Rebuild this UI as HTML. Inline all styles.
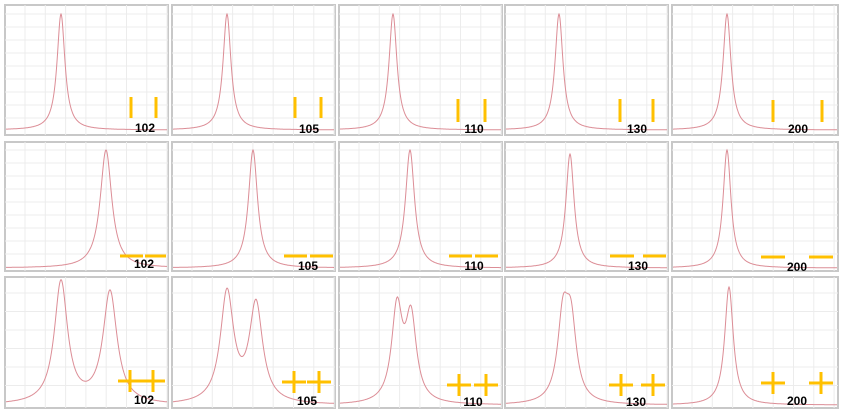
<!DOCTYPE html>
<html><head><meta charset="utf-8"><style>
html,body{margin:0;padding:0;background:#fff;width:843px;height:413px;overflow:hidden}
svg{display:block}
</style></head><body>
<svg id="s" width="843" height="413" xmlns="http://www.w3.org/2000/svg" font-family="Liberation Sans, sans-serif"></svg>
<script>
var s=document.getElementById('s'),h='';
var cols=[[5,168],[172,335],[339,502],[505,668],[672,838]];
var rows=[[5,135,13],[142,271,13],[277,408,18.5]];
var Y='#ffc000',C='#dc8d96';
var data=[
 [{p:[[61,116,4.8]],b:130,bars:'v',bx:[131,156],by:[97,118],lx:145,ly:132,t:'102'},
  {p:[[227,116,4.8]],b:130,bars:'v',bx:[295,321],by:[97,118],lx:309,ly:133,t:'105'},
  {p:[[393,116,4.8]],b:130,bars:'v',bx:[458,485],by:[99,122],lx:474,ly:133,t:'110'},
  {p:[[559,116,4.8]],b:130,bars:'v',bx:[620,653],by:[99,122],lx:637,ly:133,t:'130'},
  {p:[[727,116,4.8]],b:130,bars:'v',bx:[773,822],by:[100,122],lx:798,ly:133,t:'200'}],
 [{p:[[106,118,7]],b:268,bars:'h',bx:[[120,143],[145,166]],by:256,lx:144,ly:268,t:'102'},
  {p:[[253,118,5.5]],b:268,bars:'h',bx:[[284,307],[310,333]],by:256,lx:308,ly:270,t:'105'},
  {p:[[410,118,5.5]],b:268,bars:'h',bx:[[449,472],[475,498]],by:256,lx:474,ly:270,t:'110'},
  {p:[[570,114,5]],b:268,bars:'h',bx:[[610,634],[643,666]],by:256,lx:638,ly:270,t:'130'},
  {p:[[727,118,4.8]],b:268,bars:'h',bx:[[761,785],[809,833]],by:257,lx:797,ly:271,t:'200'}],
 [{p:[[61,122,8],[110,112,8.5]],b:405,bars:'p',bx:[130,153],by:381,lx:144,ly:404,t:'102'},
  {p:[[227,110,8],[256,98,8]],b:405,bars:'p',bx:[294,319],by:382,lx:307,ly:405,t:'105'},
  {p:[[397,93,6.5],[411,83,6.5]],b:405,bars:'p',bx:[459,486],by:385,lx:473,ly:406,t:'110'},
  {p:[[563,80,6.5],[571,74,6.5]],b:405,bars:'p',bx:[621,653],by:385,lx:636,ly:406,t:'130'},
  {p:[[729,118,5.2]],b:405,bars:'p',bx:[773,821],by:383,lx:797,ly:405,t:'200'}]
];
for(var r=0;r<3;r++){var R=rows[r];for(var c=0;c<5;c++){var X=cols[c],d=data[r][c];
 var x0=X[0],x1=X[1],y0=R[0],y1=R[1];
 h+='<rect x="'+x0+'" y="'+y0+'" width="'+(x1-x0)+'" height="'+(y1-y0)+'" fill="#fff" stroke="#c8c8c8" stroke-width="2"/>';
 for(var gx=x0+20;gx<x1;gx+=20.3)h+='<line x1="'+gx+'" y1="'+y0+'" x2="'+gx+'" y2="'+y1+'" stroke="#ececec"/>';
 for(var gy=y1-4-R[2];gy>y0;gy-=R[2])h+='<line x1="'+x0+'" y1="'+gy+'" x2="'+x1+'" y2="'+gy+'" stroke="#ececec"/>';
 var pts=[];for(var x=x0+1;x<=x1-1;x+=0.5){var v=0;d.p.forEach(function(p){var u=(x-p[0])/p[2];v+=p[1]/(1+u*u);});pts.push(x.toFixed(1)+','+(d.b-v).toFixed(1));}
 h+='<polyline points="'+pts.join(' ')+'" fill="none" stroke="'+C+'" stroke-width="1"/>';
 if(d.bars=='v'){d.bx.forEach(function(bx){h+='<rect x="'+(bx-1.5)+'" y="'+d.by[0]+'" width="3" height="'+(d.by[1]-d.by[0])+'" fill="'+Y+'"/>';});}
 else if(d.bars=='h'){d.bx.forEach(function(b){h+='<rect x="'+b[0]+'" y="'+(d.by-1.5)+'" width="'+(b[1]-b[0])+'" height="3" fill="'+Y+'"/>';});}
 else{d.bx.forEach(function(bx){h+='<rect x="'+(bx-12)+'" y="'+(d.by-1.5)+'" width="24" height="3" fill="'+Y+'"/><rect x="'+(bx-1.5)+'" y="'+(d.by-11)+'" width="3" height="22" fill="'+Y+'"/>';});}
 h+='<text x="'+d.lx+'" y="'+d.ly+'" font-size="12" font-weight="bold" text-anchor="middle" fill="#000">'+d.t+'</text>';
}}
s.innerHTML=h;
</script>
</body></html>
